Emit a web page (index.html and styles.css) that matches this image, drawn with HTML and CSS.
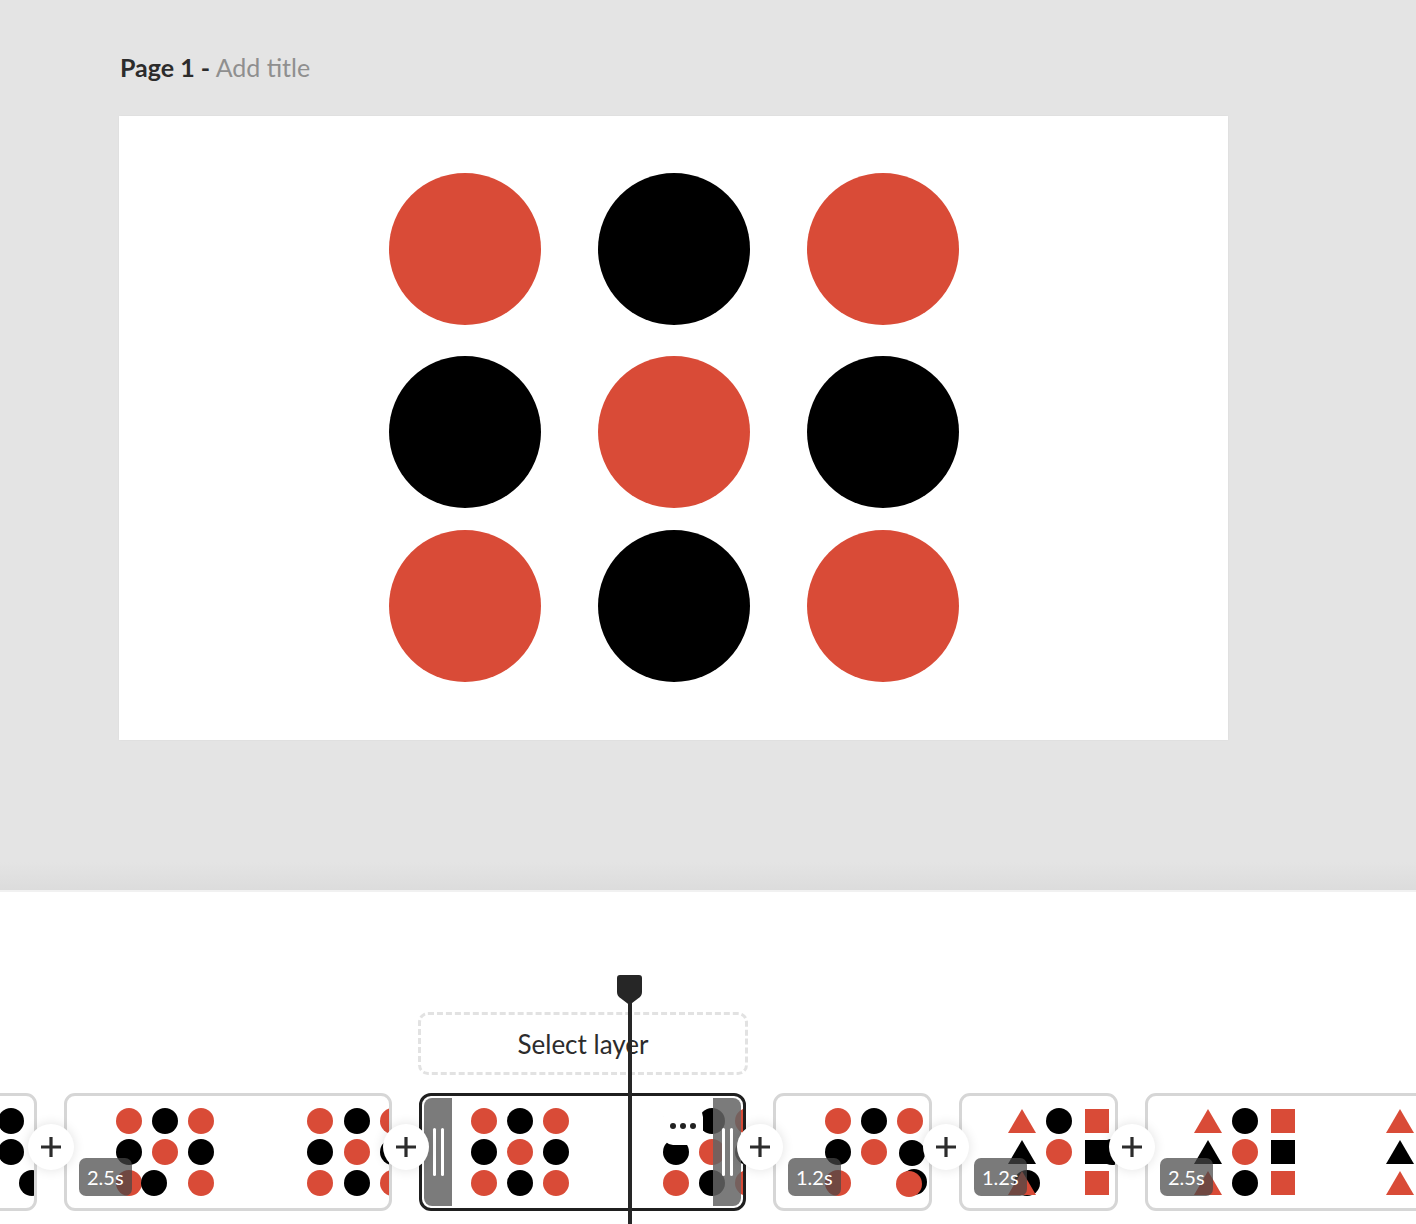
FILE: index.html
```html
<!DOCTYPE html>
<html lang="en">
<head>
  <meta charset="UTF-8">
  <meta name="viewport" content="width=device-width, initial-scale=1.0">
  <title>Page 1</title>
  <link rel="stylesheet" href="styles.css">
</head>
<body>
  <main class="stage">
    <h1 class="page-title"><b>Page 1 -</b> <span>Add title</span></h1>
    <div class="artboard">
      <svg width="1109" height="624" viewBox="0 0 1109 624">
        <circle cx="346" cy="133" r="76" class="red"/>
        <circle cx="555" cy="133" r="76" class="black"/>
        <circle cx="764" cy="133" r="76" class="red"/>
        <circle cx="346" cy="316" r="76" class="black"/>
        <circle cx="555" cy="316" r="76" class="red"/>
        <circle cx="764" cy="316" r="76" class="black"/>
        <circle cx="346" cy="490" r="76" class="red"/>
        <circle cx="555" cy="490" r="76" class="black"/>
        <circle cx="764" cy="490" r="76" class="red"/>
      </svg>
    </div>
  </main>

  <section class="timeline">
    <div class="playhead">
      <svg class="playhead-knob" width="25" height="30" viewBox="0 0 25 30">
        <path d="M3 0 H22 Q25 0 25 3 V17 Q25 21 21 23.5 L12.5 30 L4 23.5 Q0 21 0 17 V3 Q0 0 3 0 Z" fill="#262626"/>
      </svg>
      <div class="playhead-line"></div>
    </div>

    <div class="layer-slot">Select layer</div>

    <div class="track">
      <!-- clip before the visible range -->
      <div class="clip w-160">
        <svg class="thumb" width="154" height="112">
          <circle cx="131" cy="25" r="13" class="black"/>
          <circle cx="131" cy="56" r="13" class="black"/>
          <circle cx="152" cy="87" r="13" class="black"/>
        </svg>
      </div>
      <div class="join"><span class="plus"><svg width="22" height="22" viewBox="0 0 22 22"><path d="M11 1 V21 M1 11 H21" stroke="#2c2c2c" stroke-width="3.2"/></svg></span></div>

      <div class="clip w-328">
        <svg class="thumb" width="322" height="112">
          <circle cx="62" cy="25" r="13" class="red"/>
          <circle cx="98" cy="25" r="13" class="black"/>
          <circle cx="134" cy="25" r="13" class="red"/>
          <circle cx="62" cy="56" r="13" class="black"/>
          <circle cx="98" cy="56" r="13" class="red"/>
          <circle cx="134" cy="56" r="13" class="black"/>
          <circle cx="62" cy="87" r="13" class="red"/>
          <circle cx="87" cy="87" r="13" class="black"/>
          <circle cx="134" cy="87" r="13" class="red"/>
          <circle cx="253" cy="25" r="13" class="red"/>
          <circle cx="290" cy="25" r="13" class="black"/>
          <circle cx="326" cy="25" r="13" class="red"/>
          <circle cx="253" cy="56" r="13" class="black"/>
          <circle cx="290" cy="56" r="13" class="red"/>
          <circle cx="326" cy="56" r="13" class="black"/>
          <circle cx="253" cy="87" r="13" class="red"/>
          <circle cx="290" cy="87" r="13" class="black"/>
          <circle cx="326" cy="87" r="13" class="red"/>
        </svg>
        <span class="duration">2.5s</span>
      </div>
      <div class="join"><span class="plus"><svg width="22" height="22" viewBox="0 0 22 22"><path d="M11 1 V21 M1 11 H21" stroke="#2c2c2c" stroke-width="3.2"/></svg></span></div>

      <div class="clip w-327 selected">
        <svg class="thumb" width="321" height="112">
          <circle cx="62" cy="25" r="13" class="red"/>
          <circle cx="98" cy="25" r="13" class="black"/>
          <circle cx="134" cy="25" r="13" class="red"/>
          <circle cx="62" cy="56" r="13" class="black"/>
          <circle cx="98" cy="56" r="13" class="red"/>
          <circle cx="134" cy="56" r="13" class="black"/>
          <circle cx="62" cy="87" r="13" class="red"/>
          <circle cx="98" cy="87" r="13" class="black"/>
          <circle cx="134" cy="87" r="13" class="red"/>
          <circle cx="254" cy="25" r="13" class="red"/>
          <circle cx="290" cy="25" r="13" class="black"/>
          <circle cx="326" cy="25" r="13" class="red"/>
          <circle cx="254" cy="56" r="13" class="black"/>
          <circle cx="290" cy="56" r="13" class="red"/>
          <circle cx="326" cy="56" r="13" class="black"/>
          <circle cx="254" cy="87" r="13" class="red"/>
          <circle cx="290" cy="87" r="13" class="black"/>
          <circle cx="326" cy="87" r="13" class="red"/>
        </svg>
        <span class="more"><i></i><i></i><i></i></span>
        <span class="handle left"><i></i><i></i></span>
        <span class="handle right"><i></i><i></i></span>
      </div>
      <div class="join"><span class="plus"><svg width="22" height="22" viewBox="0 0 22 22"><path d="M11 1 V21 M1 11 H21" stroke="#2c2c2c" stroke-width="3.2"/></svg></span></div>

      <div class="clip w-159">
        <svg class="thumb" width="153" height="112">
          <circle cx="62" cy="25" r="13" class="red"/>
          <circle cx="98" cy="25" r="13" class="black"/>
          <circle cx="134" cy="25" r="13" class="red"/>
          <circle cx="62" cy="56" r="13" class="black"/>
          <circle cx="98" cy="56" r="13" class="red"/>
          <circle cx="136" cy="57" r="13" class="black"/>
          <circle cx="62" cy="87" r="13" class="red"/>
          <circle cx="138" cy="86" r="13" class="black"/>
          <circle cx="133" cy="88" r="13" class="red"/>
        </svg>
        <span class="duration">1.2s</span>
      </div>
      <div class="join"><span class="plus"><svg width="22" height="22" viewBox="0 0 22 22"><path d="M11 1 V21 M1 11 H21" stroke="#2c2c2c" stroke-width="3.2"/></svg></span></div>

      <div class="clip w-159">
        <svg class="thumb" width="153" height="112">
          <polygon points="46,37 60,13 74,37" class="red"/>
          <circle cx="97" cy="25" r="13" class="black"/>
          <rect x="123" y="13" width="24" height="24" class="red"/>
          <polygon points="46,68 60,44 74,68" class="black"/>
          <circle cx="97" cy="56" r="13" class="red"/>
          <circle cx="150" cy="56" r="13" class="black"/>
          <rect x="123" y="44" width="24" height="24" class="black"/>
          <circle cx="65" cy="87" r="13" class="black"/>
          <polygon points="46,99 60,75 74,99" class="red"/>
          <rect x="123" y="75" width="24" height="24" class="red"/>
        </svg>
        <span class="duration">1.2s</span>
      </div>
      <div class="join"><span class="plus"><svg width="22" height="22" viewBox="0 0 22 22"><path d="M11 1 V21 M1 11 H21" stroke="#2c2c2c" stroke-width="3.2"/></svg></span></div>

      <div class="clip w-320">
        <svg class="thumb" width="314" height="112">
          <polygon points="46,37 60,13 74,37" class="red"/>
          <circle cx="97" cy="25" r="13" class="black"/>
          <rect x="123" y="13" width="24" height="24" class="red"/>
          <polygon points="46,68 60,44 74,68" class="black"/>
          <circle cx="97" cy="56" r="13" class="red"/>
          <rect x="123" y="44" width="24" height="24" class="black"/>
          <polygon points="46,99 60,75 74,99" class="red"/>
          <circle cx="97" cy="87" r="13" class="black"/>
          <rect x="123" y="75" width="24" height="24" class="red"/>
          <polygon points="238,37 252,13 266,37" class="red"/>
          <circle cx="289" cy="25" r="13" class="black"/>
          <polygon points="238,68 252,44 266,68" class="black"/>
          <circle cx="289" cy="56" r="13" class="red"/>
          <polygon points="238,99 252,75 266,99" class="red"/>
          <circle cx="289" cy="87" r="13" class="black"/>
        </svg>
        <span class="duration">2.5s</span>
      </div>
    </div>
  </section>
</body>
</html>
```

FILE: styles.css
```css
body {
  margin: 0;
  font-family: Lato, "Open Sans", sans-serif;
  background-color: #ffffff;
  overflow: hidden;
}
.red {
  fill: #d94b37;
}
.black {
  fill: #000000;
}
.stage {
  height: 890px;
  box-sizing: border-box;
  padding: 52px 0 0 119px;
  background: linear-gradient(to bottom, #e4e4e4 calc(100% - 28px), #dcdcdc 100%);
}
.page-title {
  margin: 0 0 34px 1px;
  font-size: 25px;
  line-height: 30px;
  font-weight: 400;
  color: #8f8f8f;
}
.page-title b {
  color: #2c2c2c;
  font-weight: 700;
}
.artboard {
  width: 1109px;
  height: 624px;
  background-color: #ffffff;
  box-shadow: 0 0 2px rgba(0,0,0,0.05);
}
.artboard svg {
  display: block;
}
.timeline {
  position: relative;
  height: 332px;
  border-top: 2px solid #f1f1f1;
  overflow: hidden;
}
.playhead {
  position: absolute;
  left: 617px;
  top: 83px;
  bottom: 0;
  width: 25px;
  z-index: 5;
}
.playhead-knob {
  display: block;
}
.playhead-line {
  position: absolute;
  left: 11px;
  top: 26px;
  bottom: 0;
  width: 4px;
  background-color: #262626;
}
.layer-slot {
  margin: 120px 0 0 418px;
  width: 330px;
  height: 63px;
  box-sizing: border-box;
  border: 3px dashed #e2e2e2;
  border-radius: 10px;
  display: flex;
  align-items: center;
  justify-content: center;
  font-size: 26px;
  color: #2c2c2c;
}
.track {
  display: flex;
  align-items: flex-start;
  margin: 18px 0 0 -123px;
}
.clip {
  position: relative;
  flex-shrink: 0;
  height: 118px;
  box-sizing: border-box;
  border: 3px solid #d6d6d6;
  border-radius: 11px;
  background-color: #ffffff;
  overflow: hidden;
}
.w-160 { width: 160px; }
.w-328 { width: 328px; }
.w-327 { width: 327px; }
.w-159 { width: 159px; }
.w-320 { width: 320px; }
.clip.selected {
  border-color: #1f1f1f;
  border-radius: 12px;
}
.thumb {
  display: block;
}
.duration {
  position: absolute;
  left: 12px;
  bottom: 12px;
  height: 38px;
  padding: 0 8px;
  border-radius: 7px;
  background-color: rgba(70,70,70,0.72);
  color: #ffffff;
  font-size: 20px;
  line-height: 38px;
}
.join {
  position: relative;
  z-index: 3;
  flex-shrink: 0;
  width: 27px;
  display: flex;
  justify-content: center;
  padding-top: 31px;
}
.plus {
  flex-shrink: 0;
  width: 46px;
  height: 46px;
  margin: 0 -10px;
  border-radius: 50%;
  background-color: #ffffff;
  box-shadow: 0 0 12px rgba(0,0,0,0.12);
  display: flex;
  align-items: center;
  justify-content: center;
}
.handle {
  position: absolute;
  top: 2px;
  bottom: 2px;
  width: 28px;
  background-color: rgba(100,100,100,0.85);
  display: flex;
  align-items: center;
  justify-content: center;
  gap: 5px;
}
.handle.left {
  left: 2px;
  border-radius: 8px 0 0 8px;
}
.handle.right {
  right: 2px;
  border-radius: 0 8px 8px 0;
}
.handle i {
  width: 3px;
  height: 48px;
  border-radius: 2px;
  background-color: #ffffff;
}
.more {
  position: absolute;
  left: 241px;
  top: 11px;
  width: 40px;
  height: 38px;
  border-radius: 10px;
  background-color: #ffffff;
  display: flex;
  align-items: center;
  justify-content: center;
  gap: 4px;
}
.more i {
  width: 6px;
  height: 6px;
  border-radius: 50%;
  background-color: #222222;
}
```
